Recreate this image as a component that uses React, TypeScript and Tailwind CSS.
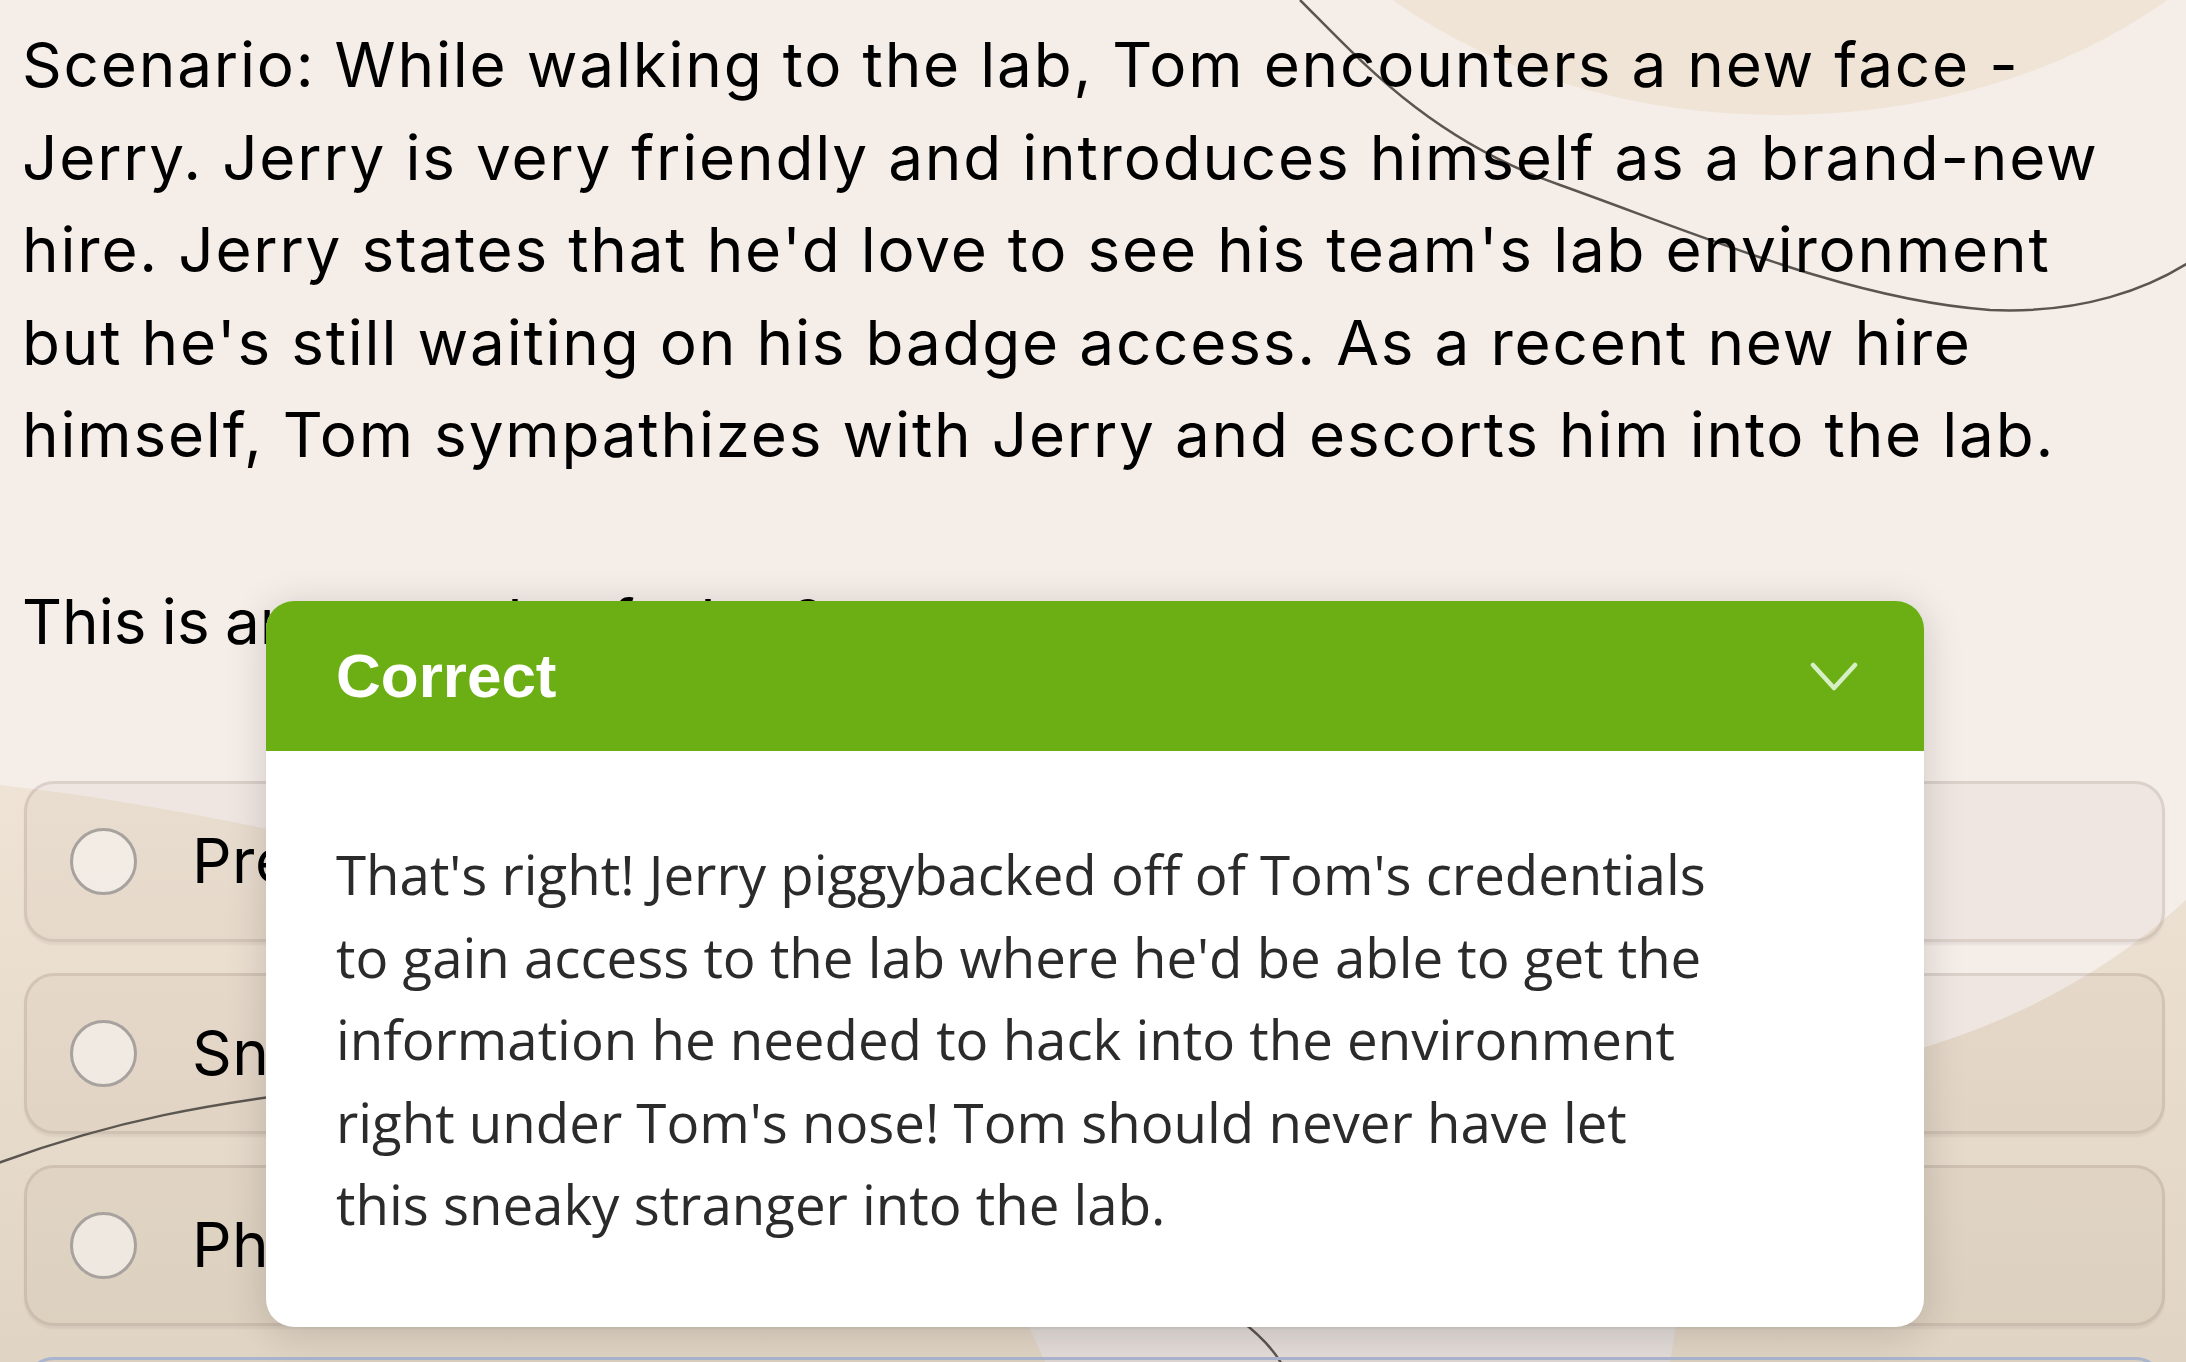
import React from "react";

const scenario = [
  "Scenario: While walking to the lab, Tom encounters a new face -",
  "Jerry. Jerry is very friendly and introduces himself as a brand-new",
  "hire. Jerry states that he'd love to see his team's lab environment",
  "but he's still waiting on his badge access. As a recent new hire",
  "himself, Tom sympathizes with Jerry and escorts him into the lab.",
];

const feedback = [
  "That's right! Jerry piggybacked off of Tom's credentials",
  "to gain access to the lab where he'd be able to get the",
  "information he needed to hack into the environment",
  "right under Tom's nose! Tom should never have let",
  "this sneaky stranger into the lab.",
];

const options = ["Pretexting", "Snooping", "Phishing"];

function Background() {
  return (
    <svg
      className="absolute inset-0 pointer-events-none"
      width="2186"
      height="1362"
      viewBox="0 0 2186 1362"
    >
      <defs>
        <linearGradient id="lowerBeige" x1="0" y1="0" x2="0" y2="1">
          <stop offset="0" stopColor="#efe3d5" />
          <stop offset="1" stopColor="#e0d4c4" />
        </linearGradient>
      </defs>
      <ellipse cx="1780" cy="-265" rx="540" ry="380" fill="#efe4d6" />
      <path
        d="M0,785 C700,862 1700,1350 2186,900 L2186,1362 L0,1362 Z"
        fill="url(#lowerBeige)"
      />
      <path d="M990,1240 L1690,1240 L1670,1362 L1045,1362 Z" fill="#e3dcd8" />
      <path
        d="M1300,0 C1360,60 1430,140 1560,185 C1700,235 1850,300 1990,310 C2080,314 2150,290 2200,255"
        fill="none"
        stroke="#5a5550"
        strokeWidth="2.5"
      />
      <path
        d="M-10,1166 C100,1125 200,1100 420,1080"
        fill="none"
        stroke="#5a5550"
        strokeWidth="2.5"
      />
      <path
        d="M1240,1320 C1260,1335 1275,1350 1285,1370"
        fill="none"
        stroke="#5a5550"
        strokeWidth="2.5"
      />
    </svg>
  );
}

function OptionCard({ label }: { label: string }) {
  return (
    <div className="h-[161px] rounded-[30px] border-[3px] border-[rgba(120,100,90,0.17)] bg-[rgba(130,110,100,0.05)] shadow-[0_3px_2px_rgba(0,0,0,0.05)] flex items-center pl-[43px]">
      <div className="w-[67px] h-[67px] rounded-full border-[3px] border-[#a8a29e] bg-[rgba(250,247,245,0.6)] shrink-0" />
      <span className="ml-[55px] text-[62px] leading-none tracking-[0.5px] text-black font-['Inter',sans-serif]">
        {label}
      </span>
    </div>
  );
}

export default function App() {
  return (
    <div className="relative w-[2186px] h-[1362px] overflow-hidden bg-[#f5ede8]">
      <Background />

      <div className="relative pl-[22px] pr-[21px] pt-[19px] font-['Inter',sans-serif] text-black">
        <div className="text-[62px] leading-[92.5px] tracking-[1.8px] whitespace-nowrap">
          {scenario.map((l) => (
            <div key={l}>{l}</div>
          ))}
        </div>
        <p className="mt-[94.5px] text-[62px] leading-[92.5px] tracking-[0px] [word-spacing:-2px] whitespace-nowrap">
          This is an example of what?
        </p>
        <div className="mt-[112px] ml-[2px] flex flex-col gap-[31px]">
          {options.map((o) => (
            <OptionCard key={o} label={o} />
          ))}
          <div className="h-[161px] rounded-[30px] border-[3px] border-[#aab4cf] bg-[rgba(130,110,100,0.05)]" />
        </div>
      </div>

      <div className="absolute left-[266px] top-[601px] w-[1658px] h-[726px] rounded-[28px] bg-white overflow-hidden shadow-[0_6px_40px_rgba(0,0,0,0.16)] flex flex-col">
        <div className="h-[150px] bg-[#6caf14] flex items-center justify-between pl-[70px] pr-[66px] shrink-0">
          <span className="text-white font-bold text-[62px] leading-none font-['Liberation_Sans',Arial,sans-serif]">
            Correct
          </span>
          <svg width="48" height="30" viewBox="0 0 48 30">
            <polyline
              points="3,4 24,27 45,4"
              fill="none"
              stroke="#d6efc4"
              strokeWidth="4.5"
              strokeLinecap="round"
              strokeLinejoin="round"
            />
          </svg>
        </div>
        <div className="pl-[70px] pt-[82px] text-[54.6px] leading-[82.6px] text-[#2b2b2b] font-['Open_Sans',sans-serif] whitespace-nowrap">
          {feedback.map((l) => (
            <div key={l}>{l}</div>
          ))}
        </div>
      </div>
    </div>
  );
}
